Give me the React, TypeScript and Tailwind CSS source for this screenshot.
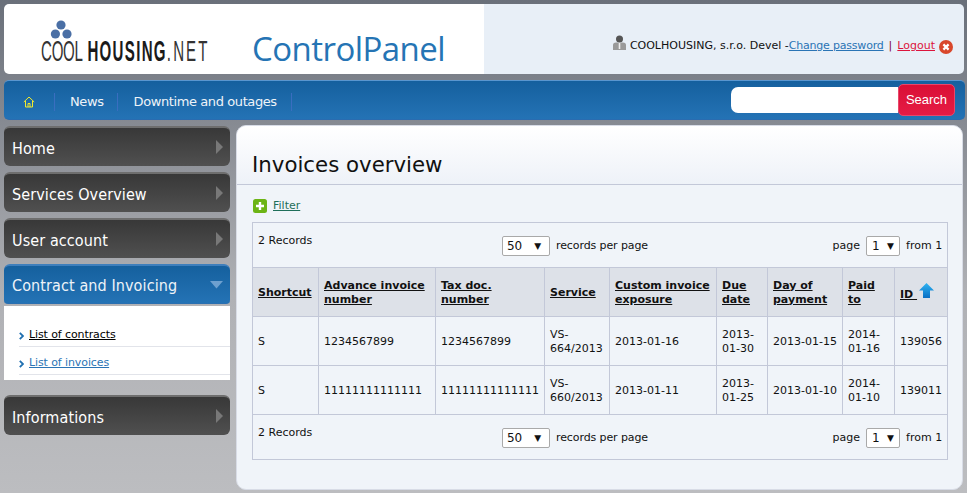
import React from "react";

function Chevron() {
  return (
    <svg width="7" height="14" viewBox="0 0 7 14" className="shrink-0">
      <path d="M0 0 L7 7 L0 14 Z" fill="#787878" />
    </svg>
  );
}

function SideItem({ label, active }: { label: string; active?: boolean }) {
  return (
    <div
      className={
        active
          ? "h-10 flex items-center justify-between pl-2 pr-[7px] rounded-t-md rounded-b-sm border-t-2 border-[#3f7fbc] border-b border-b-[#2a6fb0] bg-gradient-to-b from-[#15609e] to-[#2473b5] text-[#eef3f8] font-['DejaVu_Sans_Condensed','DejaVu_Sans',sans-serif] text-[16px] tracking-[0.1px]"
          : "h-10 flex items-center justify-between pl-2 pr-[7px] rounded-md border-t-2 border-[#6e6e6e] bg-gradient-to-b from-[#383838] to-[#505050] text-white font-['DejaVu_Sans_Condensed','DejaVu_Sans',sans-serif] text-[16px] tracking-[0.1px]"
      }
    >
      <span className="pt-[3px]">{label}</span>
      {active ? (
        <svg width="13" height="8" viewBox="0 0 13 8">
          <path d="M0 0 H13 L6.5 7.5 Z" fill="#6ea0cf" />
        </svg>
      ) : (
        <Chevron />
      )}
    </div>
  );
}

function SubLink({ label, dark }: { label: string; dark?: boolean }) {
  return (
    <div className="h-7 flex items-center gap-[5px] border-b border-[#e2e4ea] ml-[15px] pt-[6px]">
      <svg width="5" height="8" viewBox="0 0 5 8">
        <path d="M0.8 0.8 L4 4 L0.8 7.2" fill="none" stroke="#1f6fb0" strokeWidth="1.8" />
      </svg>
      <a className={dark ? "text-[11px] tracking-[-0.1px] underline text-black" : "text-[11px] tracking-[-0.1px] underline text-[#2a74b5]"}>{label}</a>
    </div>
  );
}

function Toolbar() {
  return (
    <td colSpan={9} className="border border-[#c3c8d8] px-[5px] pt-[2px] h-[45px]">
      <div className="relative flex items-center justify-between">
        <span className="absolute left-0 top-[-2px]">2 Records</span>
        <div className="flex items-center gap-[6px] ml-[244px] tracking-[-0.1px]">
          <div className="w-[48px] h-[20px] border border-[#a9a9a9] rounded-[2px] bg-white flex items-center justify-between pl-[4px] pr-[8px] text-[12px]">
            <span>50</span>
            <span className="text-[9px]">▼</span>
          </div>
          <span>records per page</span>
        </div>
        <div className="flex items-center gap-[6px]">
          <span>page</span>
          <div className="w-[34px] h-[20px] border border-[#a9a9a9] rounded-[2px] bg-white flex items-center justify-between pl-[5px] pr-[5px] text-[12px]">
            <span>1</span>
            <span className="text-[9px]">▼</span>
          </div>
          <span>from 1</span>
        </div>
      </div>
    </td>
  );
}

const cols = [66, 117, 109, 65, 107, 51, 75, 52, 53];
const heads = ["Shortcut", "Advance invoice number", "Tax doc. number", "Service", "Custom invoice exposure", "Due date", "Day of payment", "Paid to"];
const rows = [
  ["S", "1234567899", "1234567899", "VS-664/2013", "2013-01-16", "2013-01-30", "2013-01-15", "2014-01-16", "139056"],
  ["S", "11111111111111", "11111111111111", "VS-660/2013", "2013-01-11", "2013-01-25", "2013-01-10", "2014-01-10", "139011"],
];

export default function App() {
  return (
    <div className="w-[967px] h-[493px] overflow-hidden bg-gradient-to-b from-[#6a707a] via-[#b0b1b5] via-60% to-[#bcbdc0] px-[4px] pt-[4px] font-['DejaVu_Sans',sans-serif] text-[11px] text-[#111]">
      <header className="w-[960px] h-[70px] flex rounded-[5px] overflow-hidden">
        <div className="w-[480px] bg-white relative flex items-end">
          <div className="ml-[37px] mb-[12px] w-[170px] h-[42px] relative">
            <svg width="22" height="20" viewBox="0 0 22 20" className="absolute left-[9px] top-0">
              <circle cx="11" cy="5" r="4.6" fill="#4a6fa5" />
              <circle cx="5.4" cy="14" r="4.6" fill="#4a6fa5" />
              <circle cx="17" cy="14" r="4.6" fill="#4a6fa5" />
            </svg>
            <div className="absolute left-0 top-[16px] whitespace-nowrap font-['Liberation_Sans',sans-serif] text-[29px] leading-[30px] text-[#1a1a1a] origin-left scale-x-[0.52]">
              <span className="tracking-[-0.5px] text-[#333]">COOL</span>
              <span className="font-bold tracking-[2.5px] ml-[9px]">HOUSING</span>
              <span className="tracking-[4px] text-[#333]">.NET</span>
            </div>
          </div>
          <div className="ml-[41px] mb-[3px] font-['Open_Sans',sans-serif] text-[33px] leading-[44px] text-[#2574b4] tracking-[-0.55px]">ControlPanel</div>
        </div>
        <div className="flex-1 bg-[#e8eff7] flex items-end justify-end pb-[20px] pr-[11px] text-[11px] leading-[16px] whitespace-nowrap">
          <svg width="13" height="15" viewBox="0 0 13 15" className="mb-[4px] mr-[4px]">
            <circle cx="6.5" cy="4" r="3.5" fill="#555" />
            <path d="M0 15 V10 Q0 7.5 3 7.5 H10 Q13 7.5 13 10 V15 Z" fill="#9a9a9a" />
            <path d="M5.7 8 H7.3 V14 H5.7 Z" fill="#eee" />
          </svg>
          <span className="text-[#111]">COOLHOUSING, s.r.o. Devel -</span>
          <a className="underline text-[#2a74b5] tracking-[-0.2px]">Change password</a>
          <span className="mx-[5px] text-[#800040]">|</span>
          <a className="underline text-[#dc143c]">Logout</a>
          <svg width="14" height="14" viewBox="0 0 14 14" className="ml-[4px]">
            <circle cx="7" cy="7" r="7" fill="#d9472b" />
            <path d="M4.4 4.4 L9.6 9.6 M9.6 4.4 L4.4 9.6" stroke="#fff" strokeWidth="2.2" />
          </svg>
        </div>
      </header>

      <nav className="w-[961px] h-[40px] mt-[6px] rounded-[5px] border-t border-[#5a96cf] border-b border-b-[#2a6cb0] bg-gradient-to-b from-[#15609e] to-[#2473b5] flex items-center justify-between">
        <div className="flex items-center mt-[4px] text-[13px] text-[#eef3f8] tracking-[-0.4px]">
          <div className="w-[51px] h-[18px] flex items-center border-r border-[#3a6ec0] pl-[19px]">
            <svg width="12" height="12" viewBox="0 0 12 12">
              <path d="M0.8 6 L6 1 L11.2 6 M2.5 5 V11 H9.5 V5 M5 11 V7.5 H7 V11" fill="none" stroke="#f2ea2c" strokeWidth="1" />
            </svg>
          </div>
          <div className="h-[18px] flex items-center border-r border-[#3a6ec0] pl-[15px] pr-[13px]">News</div>
          <div className="h-[18px] flex items-center border-r border-[#3a6ec0] pl-[16px] pr-[14px]">Downtime and outages</div>
        </div>
        <div className="flex items-center mr-[10px]">
          <input className="w-[167px] h-[26px] bg-white rounded-l-[7px] border-0 outline-none" />
          <button className="w-[57px] h-[32px] rounded-[5px] bg-gradient-to-b from-[#d90f35] to-[#e61b45] border border-[#e8486a] text-white font-['Liberation_Sans',sans-serif] text-[13px]">Search</button>
        </div>
      </nav>

      <div className="flex mt-[5px] gap-[6px]">
        <aside className="w-[226px] pt-[1px] shrink-0">
          <div className="flex flex-col gap-[6px]">
            <SideItem label="Home" />
            <SideItem label="Services Overview" />
            <SideItem label="User account" />
            <SideItem label="Contract and Invoicing" active />
          </div>
          <div className="bg-white mt-[2px] h-[74px] pt-[13px]">
            <SubLink label="List of contracts" dark />
            <SubLink label="List of invoices" />
          </div>
          <div className="mt-[15px]">
            <SideItem label="Informations" />
          </div>
        </aside>

        <main className="w-[727px] h-[365px] rounded-[10px] bg-[#f0f4f9] border border-[#d8dce6] overflow-hidden">
          <div className="h-[59px] pl-[15px] bg-gradient-to-b from-white to-[#eef2f8] border-b border-[#c3c8d8] flex items-end pb-[3px] text-[21.3px] leading-[32px] text-[#111]">
            Invoices overview
          </div>
          <div className="h-[37px] pl-[16px] pt-[5px] flex items-center gap-[6px]">
            <svg width="14" height="14" viewBox="0 0 14 14">
              <rect width="14" height="14" rx="2.5" fill="#6cb415" />
              <path d="M7 3 V11 M3 7 H11" stroke="#fff" strokeWidth="2.4" />
            </svg>
            <a className="underline text-[#1f6f5a]">Filter</a>
          </div>
          <table className="ml-[15px] w-[696px] table-fixed border-collapse text-[11px] leading-[14px]">
            <colgroup>
              {cols.map((w, i) => (
                <col key={i} style={{ width: w }} />
              ))}
            </colgroup>
            <tbody>
              <tr>
                <Toolbar />
              </tr>
              <tr className="h-[49px] bg-[#dde1e8]">
                {heads.map((h) => (
                  <th key={h} className="border border-[#c3c8d8] px-[5px] pt-[1px] text-left font-bold underline align-middle">
                    {h}
                  </th>
                ))}
                <th className="border border-[#c3c8d8] px-[5px] pt-[1px] text-left font-bold align-middle whitespace-nowrap">
                  <span className="underline">ID&nbsp;</span>
                  <svg width="15" height="16" viewBox="0 0 15 16" className="inline-block ml-[2px] align-[-1px]">
                    <defs>
                      <linearGradient id="ar" x1="0" y1="0" x2="0" y2="1">
                        <stop offset="0" stopColor="#2fb4f2" />
                        <stop offset="1" stopColor="#0a6fc4" />
                      </linearGradient>
                    </defs>
                    <path d="M7.5 0 L15 7.5 H11 V15 H4 V7.5 H0 Z" fill="url(#ar)" />
                  </svg>
                </th>
              </tr>
              {rows.map((r, i) => (
                <tr key={i} className="h-[49px]">
                  {r.map((c, j) => (
                    <td key={j} className="border border-[#c3c8d8] px-[5px] pt-[2px] align-middle">
                      {c}
                    </td>
                  ))}
                </tr>
              ))}
              <tr>
                <Toolbar />
              </tr>
            </tbody>
          </table>
        </main>
      </div>
    </div>
  );
}
